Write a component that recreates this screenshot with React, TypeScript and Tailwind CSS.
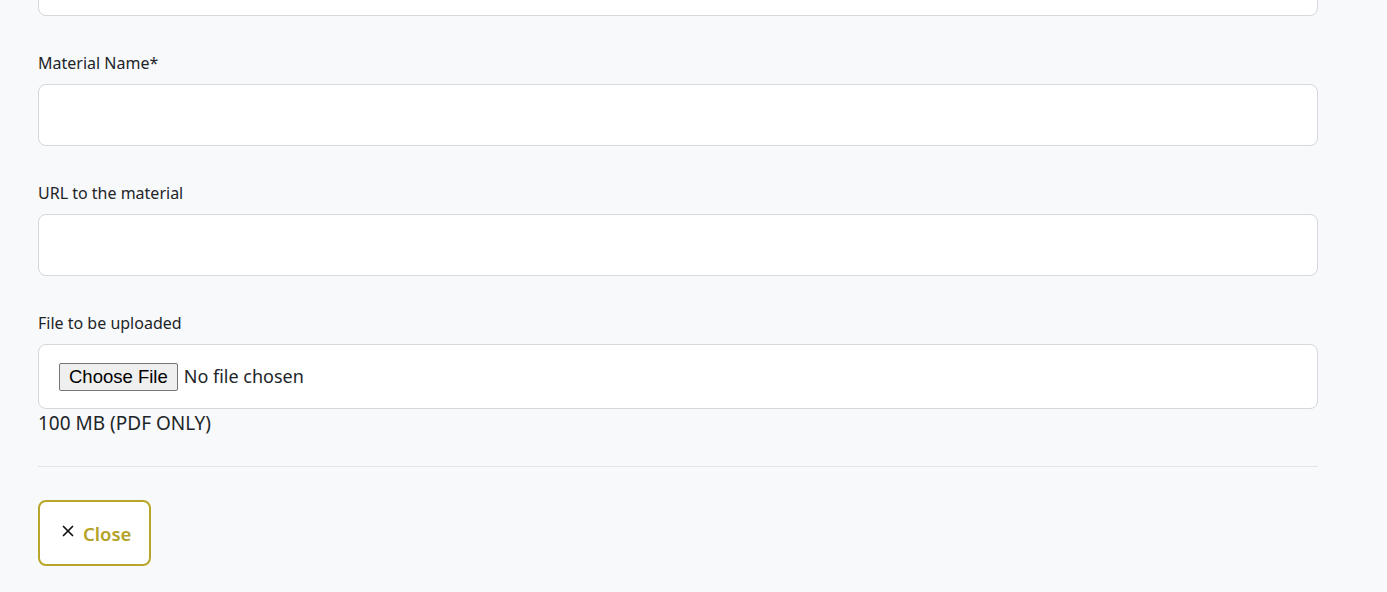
const Field = ({ label, children }: { label: string; children: React.ReactNode }) => {
    return (
        <div className="flex flex-col mt-[35px]">
            <label className="text-[16px] leading-[24px] text-[#212529] mb-[9px]">{label}</label>
            {children}
        </div>
    );
};

const App = () => {
    return (
        <div className="min-h-[592px] w-full bg-[#f8f9fa] overflow-hidden font-['Noto_Sans',sans-serif]">
            <div className="w-[1280px] ml-[38px] flex flex-col">
                <input type="text" className="mt-[-46px] h-[62px] bg-white border border-[#d4d7db] rounded-[8px] outline-none" />

                <Field label="Material Name*">
                    <input type="text" className="h-[62px] bg-white border border-[#d4d7db] rounded-[8px] outline-none px-4" />
                </Field>

                <Field label="URL to the material">
                    <input type="text" className="h-[62px] bg-white border border-[#d4d7db] rounded-[8px] outline-none px-4" />
                </Field>

                <Field label="File to be uploaded">
                    <div className="h-[65px] bg-white border border-[#d4d7db] rounded-[8px] flex items-center pl-[20px]">
                        <input
                            type="file"
                            accept="application/pdf"
                            className="outline-none text-[18px] leading-[28px] text-[#212529] file:font-['Liberation_Sans',sans-serif] file:text-[18.5px] file:leading-[26px] file:h-[28px] file:px-[9px] file:mr-[6px] file:border file:border-solid file:border-[#767676] file:rounded-[2px] file:bg-[#efefef] file:text-black"
                        />
                    </div>
                </Field>

                <p className="text-[19px] leading-[27px] text-[#212529] mt-[1px]">100 MB (PDF ONLY)</p>

                <hr className="mt-[29px] border-t border-[#e3e5e8]" />

                <div className="mt-[33px]">
                    <button
                        type="button"
                        className="w-[113px] h-[66px] bg-white border-2 border-[#b8a62c] rounded-[8px] flex items-center pl-[22px] pt-[2px] gap-[9px]"
                    >
                        <svg viewBox="0 0 12 12" width="12" height="12" className="mb-[6px]" stroke="#111" strokeWidth="1.7" strokeLinecap="round">
                            <path d="M1.5 1.5l9 9M10.5 1.5l-9 9" />
                        </svg>
                        <span className="text-[18.5px] font-semibold text-[#b3a227]">Close</span>
                    </button>
                </div>
            </div>
        </div>
    );
};

export default App;
